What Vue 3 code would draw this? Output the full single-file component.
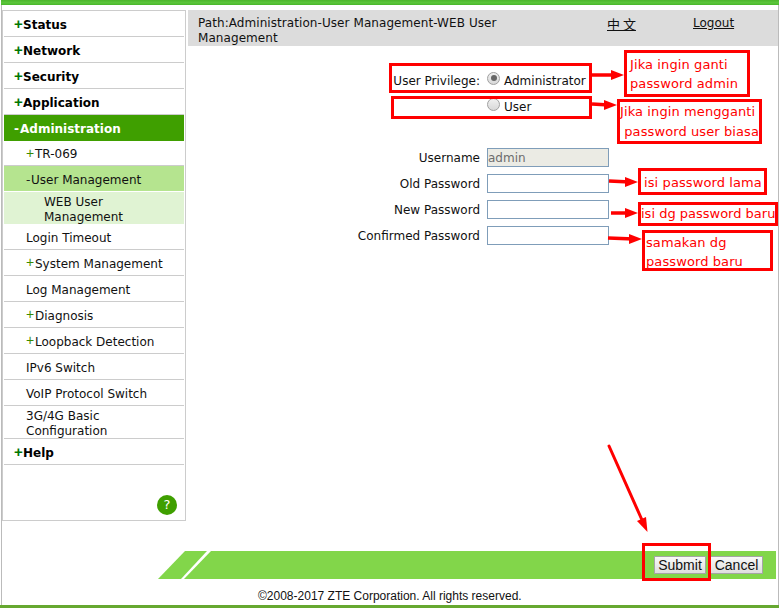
<script setup>
const menu = [
  { label: 'Status', sign: '+', level: 'top' },
  { label: 'Network', sign: '+', level: 'top' },
  { label: 'Security', sign: '+', level: 'top' },
  { label: 'Application', sign: '+', level: 'top' },
  { label: 'Administration', sign: '-', level: 'top active' },
  { label: 'TR-069', sign: '+', level: 'sub short' },
  { label: 'User Management', sign: '-', level: 'sub current' },
  { label: 'WEB User Management', sign: '', level: 'leaf' },
  { label: 'Login Timeout', sign: '', level: 'sub' },
  { label: 'System Management', sign: '+', level: 'sub' },
  { label: 'Log Management', sign: '', level: 'sub' },
  { label: 'Diagnosis', sign: '+', level: 'sub' },
  { label: 'Loopback Detection', sign: '+', level: 'sub' },
  { label: 'IPv6 Switch', sign: '', level: 'sub' },
  { label: 'VoIP Protocol Switch', sign: '', level: 'sub' },
  { label: '3G/4G Basic Configuration', sign: '', level: 'sub tall' },
  { label: 'Help', sign: '+', level: 'top' },
]
const fields = [
  { label: 'Username', value: 'admin', disabled: true },
  { label: 'Old Password', value: '' },
  { label: 'New Password', value: '' },
  { label: 'Confirmed Password', value: '' },
]
const notes = [
  { text: 'Jika ingin ganti\npassword admin', x: 624, y: 50, w: 126, h: 47, pad: '2px 0 0 3px', lh: 19 },
  { text: 'Jika ingin mengganti\n password user biasa', x: 617, y: 99, w: 145, h: 45, pad: '0 0 0 0', lh: 20 },
  { text: 'isi password lama', x: 638, y: 168, w: 129, h: 27, pad: '2px 0 0 3px', lh: 19 },
  { text: 'isi dg password baru', x: 638, y: 202, w: 140, h: 24, pad: '0 0 0 0', lh: 18, tight: true },
  { text: 'samakan dg\npassword baru', x: 642, y: 230, w: 131, h: 41, pad: '0 0 0 1px', lh: 19 },
]
const frames = [
  { x: 389, y: 63, w: 203, h: 30 },
  { x: 391, y: 96, w: 201, h: 23 },
  { x: 642, y: 543, w: 69, h: 38 },
]
const boxStyle = (b) => ({ left: b.x + 'px', top: b.y + 'px', width: b.w + 'px', height: b.h + 'px' })
const noteStyle = (n) => ({ ...boxStyle(n), padding: n.pad, lineHeight: n.lh + 'px' })
const arrows = [
  { x1: 592, y1: 75, x2: 624, y2: 75 },
  { x1: 592, y1: 104, x2: 617, y2: 105 },
  { x1: 609, y1: 181, x2: 638, y2: 182 },
  { x1: 611, y1: 213, x2: 638, y2: 213 },
  { x1: 608, y1: 238, x2: 642, y2: 239 },
]
const head = (a) => `${a.x2},${a.y2} ${a.x2 - 13},${a.y2 - 5} ${a.x2 - 13},${a.y2 + 5}`
</script>

<template>
  <div class="page">
    <div class="topbar"></div>
    <div class="inner">
      <div class="body">
        <aside class="side">
          <nav class="menu">
            <div v-for="m in menu" :key="m.label" class="item" :class="m.level">
              <span v-if="m.sign" class="sign">{{ m.sign }}</span><span class="txt">{{ m.label }}</span>
            </div>
          </nav>
          <div class="help"><span class="help-dot">?</span></div>
        </aside>
        <main class="main">
          <header class="path">
            <div class="path-text">Path:Administration-User Management-WEB User Management</div>
            <a class="lang">中 文</a>
            <a class="logout">Logout</a>
          </header>
          <section class="priv">
            <div class="priv-row">
              <span class="priv-label">User Privilege:</span>
              <span class="radio checked"></span>
              <span class="radio-text">Administrator</span>
            </div>
            <div class="priv-row">
              <span class="priv-label"></span>
              <span class="radio"></span>
              <span class="radio-text">User</span>
            </div>
          </section>
          <section class="form">
            <div v-for="f in fields" :key="f.label" class="row">
              <label class="lab">{{ f.label }}</label>
              <div class="inp" :class="{ dis: f.disabled }">{{ f.value }}</div>
            </div>
          </section>
        </main>
      </div>
      <div class="bar">
        <svg class="slant" width="54" height="28" viewBox="0 0 54 28">
          <polygon points="0,28 27,0 54,0 54,28" fill="#82d64a" />
          <polygon points="23,28 49,0 53,0 26,28" fill="#fff" />
        </svg>
        <div class="bar-fill">
          <button class="btn">Submit</button>
          <button class="btn cancel">Cancel</button>
        </div>
      </div>
      <div class="copy">©2008-2017 ZTE Corporation. All rights reserved.</div>
    </div>
    <div class="bottombar"></div>

    <div v-for="(b, i) in frames" :key="i" class="frame" :style="boxStyle(b)"></div>
    <div v-for="n in notes" :key="n.text" class="note" :class="{ tight: n.tight }" :style="noteStyle(n)">{{ n.text }}</div>
    <svg class="arrows" width="779" height="608" viewBox="0 0 779 608">
      <g v-for="(a, i) in arrows" :key="i">
        <line :x1="a.x1" :y1="a.y1" :x2="a.x2 - 8" :y2="a.y2" stroke="#f00" stroke-width="3.5" />
        <polygon :points="head(a)" fill="#f00" />
      </g>
      <line x1="609" y1="446" x2="642" y2="520" stroke="#f00" stroke-width="3" stroke-linecap="round" />
      <polygon points="647.5,532 637,521 646,517" fill="#f00" />
    </svg>
  </div>
</template>

<style scoped>
.page { position: relative; width: 779px; height: 608px; overflow: hidden; background: #fff; font-family: "DejaVu Sans", sans-serif; font-size: 12px; color: #111; display: flex; flex-direction: column; }
.topbar { height: 5px; margin-left: 1px; background: linear-gradient(#4cb52c, #5cc63c 55%, #48b62a); flex: none; }
.inner { flex: 1; min-height: 0; margin-left: 1px; border-left: 1px solid #bbb; border-right: 1px solid #bbb; display: flex; flex-direction: column; }
.body { display: flex; flex: none; height: 541px; box-sizing: border-box; padding-top: 5px; gap: 2px; }
.side { width: 184px; height: 511px; box-sizing: border-box; border: 1px solid #ccc; padding: 0 1px; position: relative; flex: none; }
.item { box-sizing: border-box; height: 26px; border-bottom: 1px solid #ccc; display: flex; align-items: center; line-height: 15px; padding-top: 3px; }
.item.top { padding-left: 10px; padding-top: 3px; font-weight: bold; color: #000; }
.item.top .sign { color: #070; font-family: "Liberation Sans", sans-serif; font-size: 15px; font-weight: bold; width: 9px; margin-top: -3px; }
.item.active { background: #3f9f00; color: #fff; border-bottom-color: #3f9f00; }
.item.active .sign { color: #fff; width: 6px; font-family: "DejaVu Sans", sans-serif; font-size: 12px; margin-top: 0; }
.item.sub { padding-left: 22px; }
.item.short { height: 25px; }
.item.sub .sign { color: #3a8a00; font-family: "Liberation Sans", sans-serif; font-size: 14px; width: 9px; margin-top: -3px; }
.item.current { background: #b5e48f; border-bottom-color: #fff; }
.item.current .sign { color: #222; width: 5px; font-family: "DejaVu Sans", sans-serif; font-size: 12px; margin-top: 0; }
.item.leaf { padding: 4px 30px 0 40px; height: 32px; background: #e0f3d3; border-bottom: none; }
.item.tall { height: 33px; padding-right: 50px; padding-top: 4px; }
.help { position: absolute; right: 8px; bottom: 5px; }
.help-dot { display: block; width: 20px; height: 20px; border-radius: 50%; background: #3f9f00; color: #fff; text-align: center; line-height: 20px; font-size: 13px; }
.main { flex: 1; min-width: 0; display: flex; flex-direction: column; }
.path { height: 36px; background: #dcdcdc; box-sizing: border-box; display: flex; padding: 6px 0 0 10px; line-height: 15px; flex: none; }
.path-text { width: 340px; letter-spacing: 0.07px; }
.lang { width: 30px; margin-left: 69px; text-decoration: underline; font-family: "Noto Sans CJK SC", sans-serif; font-size: 13px; white-space: pre; }
.logout { margin-left: 56px; text-decoration: underline; }
.priv { padding-top: 22px; display: flex; flex-direction: column; }
.priv-row { display: flex; align-items: center; height: 26px; }
.priv-label { width: 292px; text-align: right; flex: none; }
.radio { box-sizing: border-box; width: 13px; height: 13px; border-radius: 50%; border: 1px solid #a0a0a0; background: linear-gradient(#f0f0f0, #d8d8d8); margin: -6px 4px 0 7px; position: relative; flex: none; }
.radio.checked::after { content: ""; position: absolute; left: 2.5px; top: 2.5px; width: 6px; height: 6px; border-radius: 50%; background: #666; }
.form { padding-top: 28px; display: flex; flex-direction: column; gap: 7px; }
.row { display: flex; align-items: center; height: 19px; }
.lab { width: 292px; text-align: right; flex: none; }
.inp { box-sizing: border-box; width: 122px; height: 19px; margin-left: 7px; border: 1px solid #7f9db9; background: #fff; line-height: 18px; color: #6d6d6d; }
.inp.dis { background: #ebebe4; }
.bar { display: flex; height: 28px; margin: 5px 2px 0 156px; flex: none; }
.slant { flex: none; display: block; }
.bar-fill { flex: 1; background: #82d64a; display: flex; justify-content: flex-end; align-items: flex-start; gap: 4px; padding: 5px 13px 0 0; }
.btn { box-sizing: border-box; height: 18px; padding: 0; width: 52px; background: linear-gradient(#f9f9f9, #dedede); border: 1px solid #a5a5a5; font-family: "Liberation Sans", sans-serif; font-size: 14px; color: #111; line-height: 16px; }
.btn.cancel { width: 53px; }
.copy { margin: 10px 0 0 256px; font-family: "Liberation Sans", sans-serif; font-size: 12px; line-height: 14px; }
.bottombar { height: 3px; background: #66a830; flex: none; }
.frame, .note { position: absolute; box-sizing: border-box; border: 3px solid #f00; }
.note { color: #f00; font-size: 13px; letter-spacing: 0.1px; white-space: pre; background: #fff; overflow: hidden; }
.note.tight { letter-spacing: 0; }
.arrows { position: absolute; left: 0; top: 0; pointer-events: none; }
</style>
